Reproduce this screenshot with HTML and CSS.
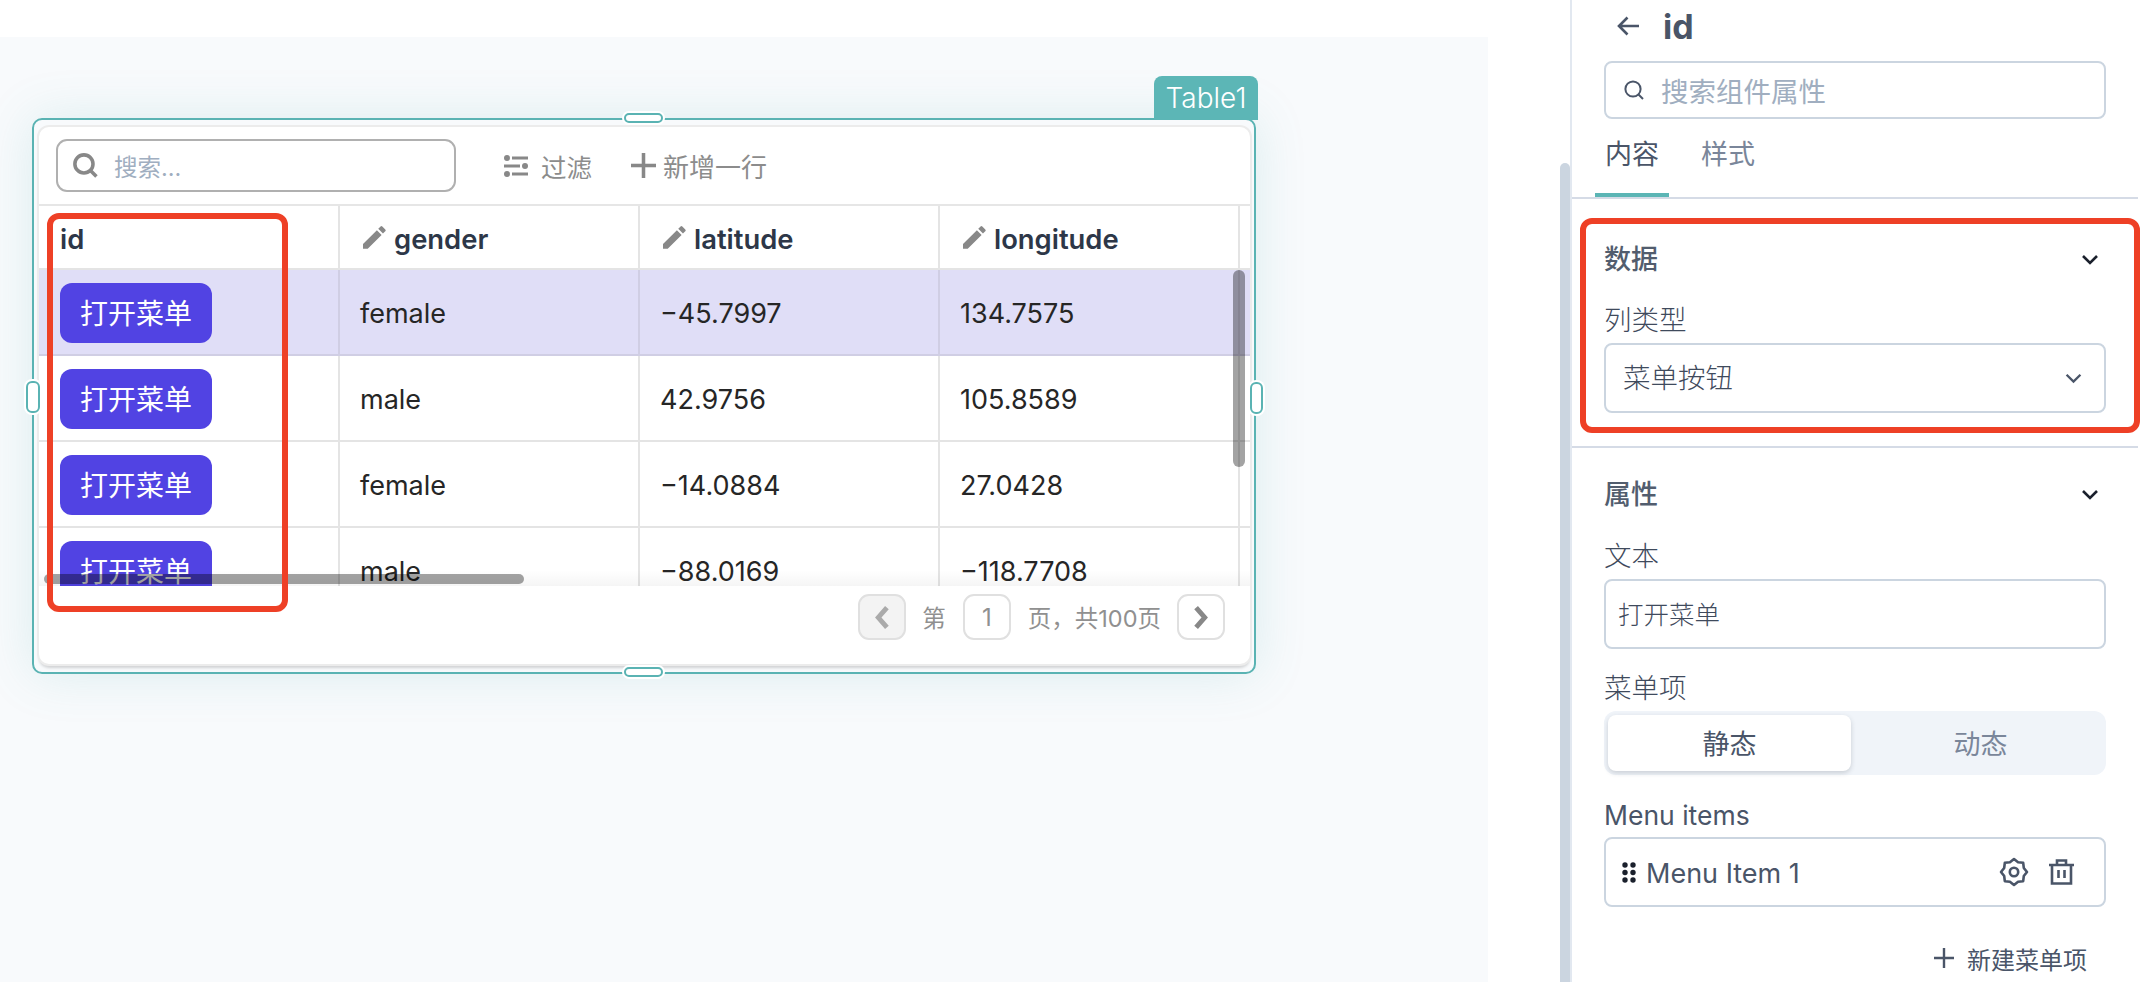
FILE: index.html
```html
<!DOCTYPE html>
<html lang="zh">
<head>
<meta charset="utf-8">
<title>Table1</title>
<link rel="stylesheet" href="styles.css">
</head>
<body>
<div class="app">
  <main class="stage">
    <div class="canvas">
      <div class="frame">
        <div class="tag">Table1</div>
        <span class="handle handle-top"></span>
        <span class="handle handle-bottom"></span>
        <span class="handle handle-left"></span>
        <span class="handle handle-right"></span>
        <div class="card">
          <div class="toolbar">
            <div class="table-search">
              <svg class="ico-search" viewBox="0 0 24 24"><circle cx="10.5" cy="10.5" r="8.7"/><path d="M16.5 16.5L22.500 22.500"/></svg>
              <span class="table-search-text">搜索...</span>
            </div>
            <div class="tool tool-filter">
              <svg class="ico-filter" viewBox="0 0 24 22"><circle cx="3" cy="3" r="3"/><rect x="8" y="1.5" width="16" height="3"/><rect x="0" y="9.5" width="16" height="3"/><circle cx="21" cy="11" r="3"/><circle cx="3" cy="19" r="3"/><rect x="8" y="17.5" width="16" height="3"/></svg>
              <span>过滤</span>
            </div>
            <div class="tool tool-add">
              <svg class="ico-plus" viewBox="0 0 24 24"><rect x="10.3" y="0" width="3.4" height="24"/><rect x="0" y="10.3" width="24" height="3.4"/></svg>
              <span>新增一行</span>
            </div>
          </div>
          <div class="table-body">
            <div class="grid">
              <div class="cell head first">id</div>
              <div class="cell head"><svg class="ico-edit" viewBox="3 3 18.3 18"><path d="M3 17.25V21h3.75L17.81 9.94l-3.75-3.75L3 17.25zM20.71 7.04a1 1 0 0 0 0-1.41l-2.34-2.34a1 1 0 0 0-1.41 0l-1.83 1.83 3.75 3.75 1.83-1.83z"/></svg>gender</div>
              <div class="cell head"><svg class="ico-edit" viewBox="3 3 18.3 18"><path d="M3 17.25V21h3.75L17.81 9.94l-3.75-3.75L3 17.25zM20.71 7.04a1 1 0 0 0 0-1.41l-2.34-2.34a1 1 0 0 0-1.41 0l-1.83 1.83 3.75 3.75 1.83-1.83z"/></svg>latitude</div>
              <div class="cell head"><svg class="ico-edit" viewBox="3 3 18.3 18"><path d="M3 17.25V21h3.75L17.81 9.94l-3.75-3.75L3 17.25zM20.71 7.04a1 1 0 0 0 0-1.41l-2.34-2.34a1 1 0 0 0-1.41 0l-1.83 1.83 3.75 3.75 1.83-1.83z"/></svg>longitude</div>
              <div class="cell head end"></div>

              <div class="cell first sel"><span class="menu-btn">打开菜单</span></div>
              <div class="cell sel">female</div>
              <div class="cell sel">−45.7997</div>
              <div class="cell sel">134.7575</div>
              <div class="cell end sel"></div>

              <div class="cell first"><span class="menu-btn">打开菜单</span></div>
              <div class="cell">male</div>
              <div class="cell">42.9756</div>
              <div class="cell">105.8589</div>
              <div class="cell end"></div>

              <div class="cell first"><span class="menu-btn">打开菜单</span></div>
              <div class="cell">female</div>
              <div class="cell">−14.0884</div>
              <div class="cell">27.0428</div>
              <div class="cell end"></div>

              <div class="cell first"><span class="menu-btn">打开菜单</span></div>
              <div class="cell">male</div>
              <div class="cell">−88.0169</div>
              <div class="cell">−118.7708</div>
              <div class="cell end"></div>
            </div>
            <span class="fade"></span>
            <span class="bar bar-h"></span>
            <span class="bar bar-v"></span>
          </div>
          <div class="pager">
            <span class="page-btn page-prev"><svg class="ico-page" viewBox="0 0 14 22"><path d="M11 3L4 11l7 8"/></svg></span>
            <span class="page-label label-first">第</span>
            <span class="page-btn page-num">1</span>
            <span class="page-label label-total">页，共100页</span>
            <span class="page-btn page-next"><svg class="ico-page" viewBox="0 0 14 22"><path d="M3 3l7 8-7 8"/></svg></span>
          </div>
        </div>
      </div>
    </div>
  </main>

  <div class="gutter"><span class="thumb"></span></div>

  <aside class="panel">
    <div class="panel-head">
      <svg class="ico-back" viewBox="0 0 22 20"><path d="M10.5 1.5L2 10l8.500 8.500M2 10h20"/></svg>
      <span class="panel-title">id</span>
    </div>
    <div class="input panel-search">
      <svg class="ico-psearch" viewBox="0 0 20 20"><circle cx="9" cy="9" r="7.600"/><path d="M14.500 14.500L19 19"/></svg>
      <span>搜索组件属性</span>
    </div>
    <div class="tabs">
      <span class="tab tab-on">内容</span>
      <span class="tab">样式</span>
    </div>

    <section class="section section-data">
      <div class="section-title"><span>数据</span><svg class="ico-chev" viewBox="0 0 18 11"><path d="M2 2l7 7 7-7"/></svg></div>
      <div class="label label-type">列类型</div>
      <div class="input select"><span class="lift">菜单按钮</span><svg class="ico-chev-sm" viewBox="0 0 16 10"><path d="M1.500 1.500L8 8l6.500-6.500"/></svg></div>
    </section>

    <section class="section section-props">
      <div class="section-title"><span>属性</span><svg class="ico-chev" viewBox="0 0 18 11"><path d="M2 2l7 7 7-7"/></svg></div>
      <div class="label label-text">文本</div>
      <div class="input text-input"><span class="lift">打开菜单</span></div>
      <div class="label label-gap">菜单项</div>
      <div class="segment">
        <span class="seg seg-on">静态</span>
        <span class="seg">动态</span>
      </div>
      <div class="label label-gap label-latin">Menu items</div>
      <div class="input item-box">
        <svg class="ico-drag" viewBox="0 0 14 21"><circle cx="3" cy="3" r="2.700"/><circle cx="11" cy="3" r="2.700"/><circle cx="3" cy="10.500" r="2.700"/><circle cx="11" cy="10.500" r="2.700"/><circle cx="3" cy="18" r="2.700"/><circle cx="11" cy="18" r="2.700"/></svg>
        <span class="item-name">Menu Item 1</span>
        <svg class="ico-gear" viewBox="-1 -1 30 30"><path d="M14 1l4.060 3.200 5.130.610.600 5.130L27 14l-3.210 4.060-.6 5.130-5.130.600L14 27l-4.060-3.210-5.130-.6-.6-5.130L1 14l3.210-4.060.6-5.130 5.130-.610z"/><circle cx="14" cy="14" r="4.200"/></svg>
        <svg class="ico-trash" viewBox="0 0 27 26"><path d="M1 6h25M9 6V1.500h9V6M4 6v18.500h19V6M10.500 11v8M16.500 11v8"/></svg>
      </div>
      <div class="add-item">
        <svg class="ico-add" viewBox="0 0 20 20"><path d="M10 0v20M0 10h20"/></svg>
        <span>新建菜单项</span>
      </div>
    </section>
  </aside>

  <span class="mark mark-col"></span>
  <span class="mark mark-data"></span>
</div>
</body>
</html>
```
FILE: styles.css
```css
* { box-sizing: border-box; }
html, body { margin: 0; padding: 0; }
body {
  background: #fff;
  font-family: Inter, "Noto Sans CJK SC", sans-serif;
  color: #4a5568;
  overflow: hidden;
}
svg { display: block; flex: none; }

.app { position: relative; display: flex; width: 2140px; height: 982px; overflow: hidden; }

/* canvas */
.stage { width: 1488px; flex: none; padding-top: 37px; }
.canvas { height: 945px; background: #f8fafc; padding: 81px 0 0 32px; }
.frame {
  position: relative;
  width: 1224px;
  height: 556px;
  border: 2px solid #5ab3b3;
  border-radius: 10px;
  padding: 7px 4px 8px 5px;
  box-shadow: 0 0 50px rgba(80, 170, 170, .17);
}
.tag {
  position: absolute;
  top: -44px;
  right: -4px;
  width: 104px;
  height: 44px;
  background: #5cb6b6;
  border-radius: 8px 8px 0 0;
  color: #fff;
  font-size: 28px;
  font-weight: 300;
  line-height: 44px;
  text-align: center;
}
.handle {
  position: absolute;
  background: #fff;
  border: 2px solid #5ab3b3;
  border-radius: 6px;
  box-shadow: 0 0 0 2px #fff;
}
.handle-top { top: -7px; left: 590px; width: 39px; height: 10px; }
.handle-bottom { bottom: -5px; left: 590px; width: 39px; height: 10px; }
.handle-left { top: 261px; left: -8px; width: 14px; height: 32px; }
.handle-right { top: 262px; right: -9px; width: 13px; height: 32px; }

.card {
  width: 1211px;
  height: 537px;
  background: #fff;
  border-radius: 10px;
  box-shadow: 0 0 0 2px #ececec, 0 4px 3px rgba(0, 0, 0, .16);
  overflow: hidden;
}

/* toolbar */
.toolbar {
  display: flex;
  align-items: center;
  height: 79px;
  padding: 0 0 0 17px;
  border-bottom: 2px solid #e6e6e6;
  color: #8c8c8c;
  font-size: 25.500px;
}
.table-search {
  display: flex;
  align-items: center;
  width: 400px;
  height: 53px;
  border: 2px solid #b0b0b0;
  border-radius: 11px;
  padding-left: 15px;
}
.ico-search { width: 25px; height: 25px; fill: none; stroke: #888; stroke-width: 3.400; }
.table-search-text { margin-left: 16px; color: #a0aec0; font-size: 23.500px; }
.tool { display: flex; align-items: center; }
.tool-filter { margin-left: 48px; }
.tool-add { margin-left: 39px; font-size: 26px; }
.ico-filter { width: 24px; height: 22px; fill: #888; margin-right: 13px; }
.ico-plus { width: 25px; height: 25px; fill: #888; margin-right: 7px; }

/* table */
.table-body { position: relative; height: 380px; overflow: hidden; }
.grid {
  display: grid;
  grid-template-columns: 301px 300px 300px 300px 10px;
  grid-template-rows: 64px repeat(4, 86px);
}
.cell {
  display: flex;
  align-items: center;
  padding: 2px 0 0 20px;
  border-right: 2px solid #e4e4e4;
  border-bottom: 2px solid #e4e4e4;
  color: #262626;
  font-size: 27px;
}
.cell.first { padding-left: 21px; }
.cell.end { padding: 0; border-right: 0; }
.cell.head { padding: 4px 0 0 23px; color: #2d3748; font-size: 27.400px; font-weight: 600; }
.cell.head.first { padding-left: 21px; }
.cell.sel { background: #e0def7; border-color: #d0cee4; }
.ico-edit { width: 23px; height: 23px; fill: #888; margin: -3px 8px 0 0; }
.menu-btn {
  display: flex;
  align-items: center;
  justify-content: center;
  width: 152px;
  height: 60px;
  padding-bottom: 2px;
  background: #5143e3;
  border-radius: 12px;
  color: #fff;
  font-size: 28px;
}
.fade {
  position: absolute;
  left: 0;
  right: 0;
  bottom: 0;
  height: 16px;
  background: linear-gradient(rgba(0, 0, 0, 0), rgba(0, 0, 0, .04));
}
.bar { position: absolute; background: rgba(0, 0, 0, .36); border-radius: 5px; }
.bar-h { left: 5px; top: 368px; width: 480px; height: 10px; }
.bar-v { left: 1194px; top: 64px; width: 12px; height: 197px; border-radius: 6px; }

/* pager */
.pager {
  display: flex;
  align-items: center;
  justify-content: flex-end;
  height: 78px;
  padding: 0 25px 0 0;
  color: #909090;
  font-size: 23.500px;
}
.page-btn {
  display: flex;
  align-items: center;
  justify-content: center;
  width: 48px;
  height: 46px;
  border: 2px solid #e0e0e0;
  border-radius: 11px;
  margin-top: -16px;
}
.page-num { font-size: 24px; }
.page-prev { background: #f3f3f3; color: #aaa; }
.page-next { color: #888; }
.ico-page { width: 18px; height: 27px; fill: none; stroke: currentColor; stroke-width: 4; }
.label-first { margin: -16px 17px 0 16px; }
.label-total { margin: -16px 16px 0 17px; }

/* side */
.gutter { flex: none; width: 82px; padding: 163px 0 0 72px; }
.thumb { display: block; width: 10px; height: 819px; background: #cbd5e0; border-radius: 5px 5px 0 0; }
.panel {
  flex: none;
  width: 570px;
  height: 982px;
  border-left: 2px solid #e2e8f0;
  padding: 0 32px 0 32px;
}
.panel-head { display: flex; align-items: center; height: 52px; margin-bottom: 9px; padding-left: 13px; }
.ico-back { width: 22px; height: 20px; fill: none; stroke: #4a5568; stroke-width: 2.600; }
.panel-title { margin-left: 24px; font-size: 34px; font-weight: 700; color: #4a5568; }
.input {
  display: flex;
  align-items: center;
  width: 502px;
  border: 2px solid #cbd5e0;
  border-radius: 8px;
  background: #fff;
}
.panel-search { height: 58px; padding-left: 18px; color: #a0aec0; font-size: 27.500px; }
.ico-psearch { width: 20px; height: 20px; fill: none; stroke: #4a5568; stroke-width: 2; margin-right: 17px; }
.tabs {
  display: flex;
  gap: 22px;
  height: 80px;
  margin: 0 -30px 0 -32px;
  padding-left: 23px;
  border-bottom: 2px solid #d5dbe6;
}
.tab {
  height: 78px;
  padding: 17px 10px 0;
  font-size: 27px;
  line-height: 38px;
  color: #7a869a;
}
.tab-on { color: #4a5568; border-bottom: 4px solid #5bb5b5; }
.section { margin: 0 -30px 0 -32px; padding: 0 30px 0 32px; }
.section-data { height: 249px; padding-top: 36px; border-bottom: 2px solid #d5dbe6; }
.section-props { padding-top: 22px; }
.section-title {
  display: flex;
  align-items: center;
  justify-content: space-between;
  height: 50px;
  padding-right: 9px;
  font-size: 27px;
  font-weight: 500;
  color: #525d6e;
}
.section-title span { margin-top: -5px; }
.ico-chev { width: 18px; height: 11px; fill: none; stroke: #1a202c; stroke-width: 2.600; margin-top: -2px; }
.label { height: 46px; line-height: 46px; font-size: 27.500px; font-weight: 300; color: #3f4a5c; }
.label-latin { font-size: 26.500px; font-weight: 400; padding-top: 1px; color: #4a5568; }
.label-type { margin-top: 12px; }
.label-text { margin-top: 13px; }
.label-gap { margin-top: 16px; }
.select {
  height: 70px;
  justify-content: space-between;
  padding: 0 22px 0 17px;
  color: #3f4a5c;
  font-size: 27.500px;
  font-weight: 300;
}
.lift { margin-top: -4px; }
.ico-chev-sm { width: 17px; height: 11px; fill: none; stroke: #4a5568; stroke-width: 2.200; }
.text-input { height: 70px; padding-left: 12px; color: #3f4a5c; font-size: 25.500px; font-weight: 300; }
.segment {
  display: flex;
  width: 502px;
  height: 64px;
  padding: 4px;
  background: #f0f4f9;
  border-radius: 12px;
}
.seg {
  display: flex;
  align-items: center;
  justify-content: center;
  width: 243px;
  margin-right: 8px;
  padding-bottom: 2px;
  flex: 1;
  font-size: 27px;
  color: #7a869a;
}
.seg:last-child { margin-right: 0; }
.seg-on {
  flex: none;
  background: #fff;
  border-radius: 8px;
  box-shadow: 0 2px 5px rgba(45, 55, 72, .2);
  color: #4a5568;
}
.item-box { height: 70px; padding-left: 16px; }
.ico-drag { width: 14px; height: 21px; fill: #1a202c; margin-right: 10px; }
.item-name { flex: 1; padding-top: 2px; font-size: 27px; color: #4a5568; }
.ico-gear { width: 30px; height: 30px; fill: none; stroke: #4a5568; stroke-width: 2.600; stroke-linejoin: round; margin-right: 19px; }
.ico-trash { width: 27px; height: 26px; fill: none; stroke: #4a5568; stroke-width: 2.600; margin-right: 29px; }
.add-item {
  display: flex;
  align-items: center;
  justify-content: flex-end;
  width: 502px;
  height: 40px;
  margin-top: 31px;
  padding-right: 19px;
  font-size: 24px;
}
.ico-add { width: 20px; height: 20px; fill: none; stroke: #4a5568; stroke-width: 2.400; margin-right: 13px; }

/* annotation marks */
.mark { position: absolute; border: 6px solid #ee4026; border-radius: 12px; }
.mark-col { left: 47px; top: 213px; width: 241px; height: 399px; }
.mark-data { left: 1580px; top: 218px; width: 560px; height: 215px; }
```
